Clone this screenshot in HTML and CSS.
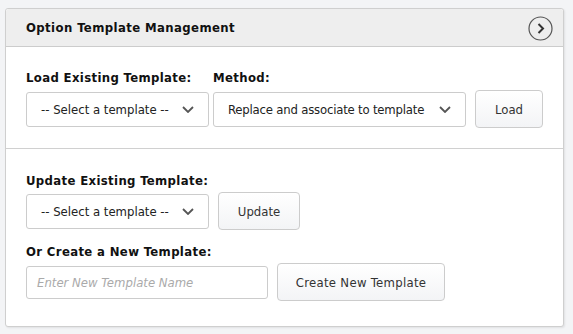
FILE: index.html
```html
<!DOCTYPE html>
<html>
<head>
<meta charset="utf-8">
<link rel="stylesheet" href="styles.css">
</head>
<body>
<div class="panel">
  <div class="panel-header">
    <span class="panel-title">Option Template Management</span>
    <span class="circle-btn">
      <svg width="25" height="25" viewBox="0 0 25 25"><circle cx="12.5" cy="12.5" r="11.5" fill="none" stroke="#555" stroke-width="1.2"/><path d="M10.5 8 L15 12.5 L10.5 17" fill="none" stroke="#333" stroke-width="2"/></svg>
    </span>
  </div>
  <div class="section section-load">
    <div class="label-row">
      <span class="label label-load">Load Existing Template:</span>
      <span class="label">Method:</span>
    </div>
    <div class="row">
      <div class="select sel-template"><span>-- Select a template --</span><span class="chev"><svg width="12" height="7" viewBox="0 0 12 7"><path d="M1 1 L6 6 L11 1" fill="none" stroke="#555" stroke-width="1.8"/></svg></span></div>
      <div class="select sel-method"><span class="method-text">Replace and associate to template</span><span class="chev"><svg width="12" height="7" viewBox="0 0 12 7"><path d="M1 1 L6 6 L11 1" fill="none" stroke="#555" stroke-width="1.8"/></svg></span></div>
      <button class="btn btn-load">Load</button>
    </div>
  </div>
  <div class="section section-update">
    <div class="label">Update Existing Template:</div>
    <div class="row">
      <div class="select sel-template"><span>-- Select a template --</span><span class="chev"><svg width="12" height="7" viewBox="0 0 12 7"><path d="M1 1 L6 6 L11 1" fill="none" stroke="#555" stroke-width="1.8"/></svg></span></div>
      <button class="btn btn-update">Update</button>
    </div>
    <div class="label label-create">Or Create a New Template:</div>
    <div class="row">
      <div class="input"><span class="placeholder">Enter New Template Name</span></div>
      <button class="btn btn-create">Create New Template</button>
    </div>
  </div>
</div>
</body>
</html>
```

FILE: styles.css
```css
html, body {
  margin: 0;
  padding: 0;
}
body {
  background: #f3f4f6;
  font-family: "DejaVu Sans Condensed", "DejaVu Sans", sans-serif;
  font-size: 13px;
  color: #222;
  width: 573px;
  height: 334px;
  padding-top: 8px;
  padding-left: 5px;
  box-sizing: border-box;
}
.panel {
  width: 559px;
  height: 319px;
  box-sizing: border-box;
  background: #fff;
  border: 1px solid #cfcfcf;
  border-radius: 3px;
  box-shadow: 1px 1px 2px rgba(0,0,0,0.08);
}
.panel-header {
  height: 38px;
  box-sizing: border-box;
  background: #eeeeee;
  border-bottom: 1px solid #cccccc;
  display: flex;
  align-items: center;
  justify-content: space-between;
  padding: 0 10px 0 20px;
  border-radius: 3px 3px 0 0;
}
.panel-title {
  font-weight: bold;
  color: #111;
  letter-spacing: 0.4px;
}
.circle-btn {
  display: flex;
  margin-top: 1px;
}
.section {
  padding: 0 20px;
}
.section-load {
  padding-top: 23px;
  height: 102px;
  box-sizing: border-box;
  border-bottom: 1px solid #d0d0d0;
}
.section-update {
  padding-top: 24px;
}
.label-row {
  display: flex;
}
.label {
  font-weight: bold;
  color: #111;
  line-height: 16px;
  letter-spacing: 0.35px;
}
.label-load {
  width: 187px;
}
.row {
  display: flex;
  align-items: center;
  margin-top: 4px;
}
.section-update .row {
  margin-top: 3px;
}
.label-create {
  margin-top: 14px;
}
.select {
  height: 35px;
  box-sizing: border-box;
  border: 1px solid #cccccc;
  border-radius: 3px;
  display: flex;
  align-items: center;
  justify-content: space-between;
  padding: 0 14px 0 14px;
  color: #222;
  background: #fff;
}
.sel-template {
  width: 183px;
}
.sel-method {
  width: 253px;
  margin-left: 4px;
}
.method-text {
  letter-spacing: -0.2px;
}
.chev {
  display: flex;
}
.btn {
  height: 38px;
  box-sizing: border-box;
  border: 1px solid #cccccc;
  border-radius: 4px;
  background: linear-gradient(#ffffff, #f3f4f6);
  font-family: inherit;
  font-size: 13px;
  color: #333;
  padding: 0;
  margin-left: 9px;
}
.btn-load { width: 68px; }
.btn-update { width: 82px; }
.btn-create { width: 168px; letter-spacing: 0.3px; }
.input {
  width: 242px;
  height: 33px;
  box-sizing: border-box;
  border: 1px solid #cccccc;
  border-radius: 3px;
  display: flex;
  align-items: center;
  padding-left: 10px;
}
.placeholder {
  font-style: italic;
  color: #aaaaaa;
  font-size: 13px;
}
```
